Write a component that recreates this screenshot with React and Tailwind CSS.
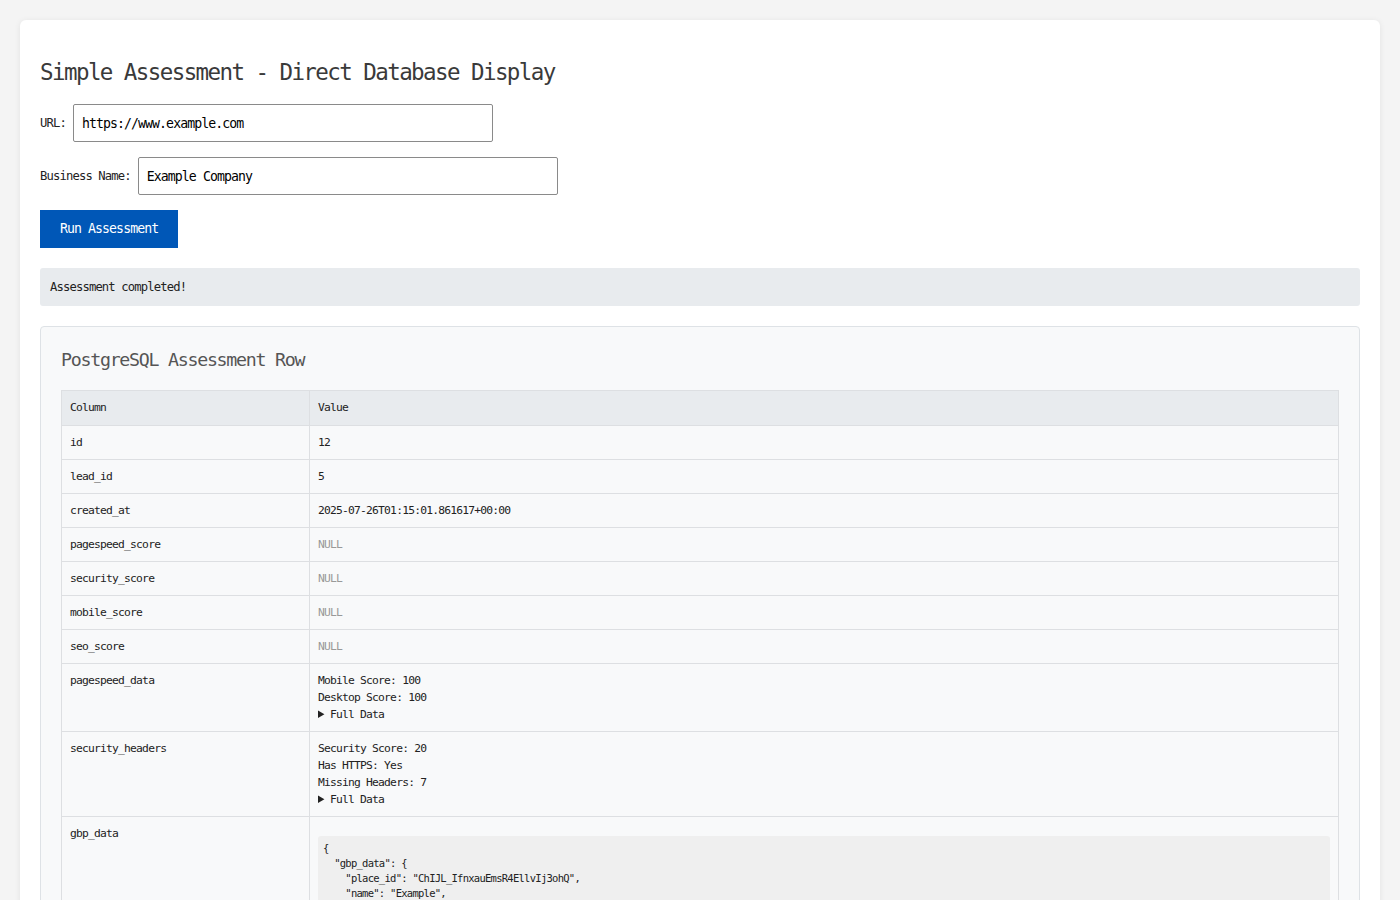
const rows = [
  { name: "id", value: "12" },
  { name: "lead_id", value: "5" },
  { name: "created_at", value: "2025-07-26T01:15:01.861617+00:00" },
  { name: "pagespeed_score", value: null },
  { name: "security_score", value: null },
  { name: "mobile_score", value: null },
  { name: "seo_score", value: null },
];

const gbpJson = `{
  "gbp_data": {
    "place_id": "ChIJL_IfnxauEmsR4EllvIj3ohQ",
    "name": "Example",
    "rating": 4.6,
    "user_ratings_total": 128,
    "formatted_address": "123 Example St, Springfield, USA",
    "website": "https://www.example.com/"
  }
}`;

function FullData() {
  return (
    <details>
      <summary className="cursor-pointer">Full Data</summary>
    </details>
  );
}

function Cell({ children, first = false }) {
  return (
    <td
      className={
        first
          ? "w-[248px] border border-[#dddfe2] px-2 py-2 align-top leading-[17px]"
          : "border border-[#dddfe2] px-2 py-2 align-top leading-[17px]"
      }
    >
      {children}
    </td>
  );
}

export default function App() {
  return (
    <div className="min-h-screen bg-[#f4f4f4] p-5 font-['DejaVu_Sans_Mono',monospace] text-[#222] tracking-[-0.07em] [&_*]:tracking-[-0.07em]">
      <div className="rounded-md bg-white px-5 pb-10 pt-[38px] shadow-[0_1px_6px_rgba(0,0,0,0.08)]">
        <h1 className="text-[22.5px] leading-[28px] text-[#3a3a3a]">
          Simple Assessment - Direct Database Display
        </h1>

        <div className="mt-[18px] flex items-center gap-[7px]">
          <label className="text-[12.2px]">URL:</label>
          <input
            defaultValue="https://www.example.com"
            className="h-[38px] w-[420px] rounded-[2px] border border-[#8a8a8a] px-2 text-[13.2px] text-black outline-none"
          />
        </div>

        <div className="mt-[15px] flex items-center gap-[7px]">
          <label className="text-[12.2px]">Business Name:</label>
          <input
            defaultValue="Example Company"
            className="h-[38px] w-[420px] rounded-[2px] border border-[#8a8a8a] px-2 text-[13.2px] text-black outline-none"
          />
        </div>

        <button className="mt-[15px] h-[38px] bg-[#0057b7] px-5 text-[13.2px] text-white">
          Run Assessment
        </button>

        <div className="mt-5 flex h-[38px] items-center rounded-[3px] bg-[#e8ebee] px-[10px] text-[12.2px]">
          Assessment completed!
        </div>

        <div className="mt-5 rounded-[4px] border border-[#dee2e6] bg-[#f8f9fa] px-5 pb-5 pt-5">
          <h2 className="mb-[17px] text-[18.3px] leading-[26px] text-[#555]">
            PostgreSQL Assessment Row
          </h2>

          <table className="w-full border-collapse text-left text-[11.3px]">
            <thead>
              <tr className="bg-[#e8ebee]">
                <th className="w-[248px] border border-[#dddfe2] px-2 py-2 font-normal leading-[18px]">
                  Column
                </th>
                <th className="border border-[#dddfe2] px-2 py-2 font-normal leading-[18px]">
                  Value
                </th>
              </tr>
            </thead>
            <tbody>
              {rows.map((row) => (
                <tr key={row.name}>
                  <Cell first>{row.name}</Cell>
                  <Cell>
                    {row.value === null ? (
                      <span className="text-[#999]">NULL</span>
                    ) : (
                      row.value
                    )}
                  </Cell>
                </tr>
              ))}
              <tr>
                <Cell first>pagespeed_data</Cell>
                <Cell>
                  <div>Mobile Score: 100</div>
                  <div>Desktop Score: 100</div>
                  <FullData />
                </Cell>
              </tr>
              <tr>
                <Cell first>security_headers</Cell>
                <Cell>
                  <div>Security Score: 20</div>
                  <div>Has HTTPS: Yes</div>
                  <div>Missing Headers: 7</div>
                  <FullData />
                </Cell>
              </tr>
              <tr>
                <Cell first>gbp_data</Cell>
                <Cell>
                  <pre className="mb-[11px] mt-[11px] overflow-x-auto rounded-[3px] bg-[#efefef] p-[5px] font-['DejaVu_Sans_Mono',monospace] text-[10.5px] leading-[15px]">
                    {gbpJson}
                  </pre>
                </Cell>
              </tr>
            </tbody>
          </table>
        </div>
      </div>
    </div>
  );
}
